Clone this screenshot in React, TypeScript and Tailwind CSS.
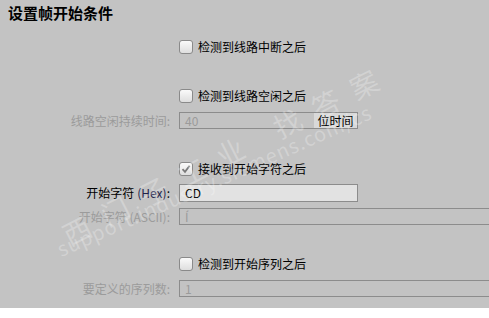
const font = {
  fontFamily: '"Noto Sans CJK SC", "Noto Sans", sans-serif',
};

interface CheckRowProps {
  label: string;
  checked?: boolean;
  className?: string;
}

const CheckRow: React.FC<CheckRowProps> = ({ label, checked, className }) => (
  <div className={`flex h-[16px] items-center pl-[179px] ${className ?? ""}`}>
    <div className="flex h-[14px] w-[14px] items-center justify-center rounded-[3px] border border-[#8a8a8a] bg-gradient-to-b from-[#fafafa] to-[#dedede]">
      {checked && (
        <svg width="10" height="10" viewBox="0 0 10 10">
          <path
            d="M1.5 5.2 L4 7.8 L8.6 1.8"
            fill="none"
            stroke="#7a7a7a"
            strokeWidth="1.8"
          />
        </svg>
      )}
    </div>
    <span className="ml-[5px] text-[12px] leading-none text-black">
      {label}
    </span>
  </div>
);

interface FieldRowProps {
  label: React.ReactNode;
  disabled?: boolean;
  className?: string;
  children: React.ReactNode;
}

const FieldRow: React.FC<FieldRowProps> = ({
  label,
  disabled,
  className,
  children,
}) => (
  <div className={`flex items-stretch ${className ?? ""}`}>
    <div
      className={`flex w-[170px] shrink-0 items-center justify-end text-[12px] leading-none ${
        disabled ? "text-[#9b9b9b]" : "text-black"
      }`}
    >
      {label}
    </div>
    <div className="ml-[9px] flex min-w-0 flex-1">{children}</div>
  </div>
);

// faint diagonal site watermark lying over the form
const Watermark = () => (
  <div className="pointer-events-none absolute inset-0 overflow-hidden text-white/25">
    <span className="absolute left-[64px] top-[222px] origin-left -rotate-[27deg] whitespace-nowrap text-[28px] leading-none tracking-[15px]">
      西门子工业 找答案
    </span>
    <span className="absolute left-[58px] top-[240px] origin-left -rotate-[24deg] whitespace-nowrap text-[20px] leading-none tracking-[1px]">
      support.industry.siemens.com/cs
    </span>
  </div>
);

export default function App() {
  return (
    <div className="h-[318px] w-[489px] overflow-hidden bg-white" style={font}>
      <div className="relative flex h-[308px] flex-col bg-[#c3c3c3]">
        <div className="h-[26px] pl-[8px] pt-[3px] text-[15px] font-bold leading-[19px] text-black">
          设置帧开始条件
        </div>

        <CheckRow label="检测到线路中断之后" className="mt-[13px]" />
        <CheckRow label="检测到线路空闲之后" className="mt-[33px]" />

        <FieldRow label="线路空闲持续时间:" disabled className="mt-[8px] h-[17px]">
          <div className="flex w-[179px] border border-[#8c8c8c]">
            <div className="flex flex-1 items-center pl-[5px] text-[12px] leading-none text-[#9b9b9b]">
              40
            </div>
            <div className="flex w-[43px] items-center justify-center bg-[#d9d9d9] text-[12px] leading-none text-black">
              位时间
            </div>
          </div>
        </FieldRow>

        <CheckRow label="接收到开始字符之后" checked className="mt-[32px]" />

        <FieldRow
          label={
            <>
              开始字符 <span className="ml-[3px] text-[#22224a]">(Hex)</span>:
            </>
          }
          className="mt-[7px] h-[18px]"
        >
          <div className="flex w-[179px] items-center border border-[#8c8c8c] bg-[#e2e2e2] pl-[5px] text-[12px] leading-none text-black">
            CD
          </div>
        </FieldRow>

        <FieldRow label="开始字符 (ASCII):" disabled className="mt-[6px] h-[17px]">
          <div className="-mr-[4px] flex flex-1 items-center border border-[#8c8c8c] pl-[5px] text-[12px] leading-none text-[#9b9b9b]">
            Í
          </div>
        </FieldRow>

        <CheckRow label="检测到开始序列之后" className="mt-[31px]" />

        <FieldRow label="要定义的序列数:" disabled className="mt-[8px] h-[17px]">
          <div className="-mr-[4px] flex flex-1 items-center border border-[#8c8c8c] pl-[5px] text-[12px] leading-none text-[#9b9b9b]">
            1
          </div>
        </FieldRow>

        <Watermark />
      </div>
    </div>
  );
}
